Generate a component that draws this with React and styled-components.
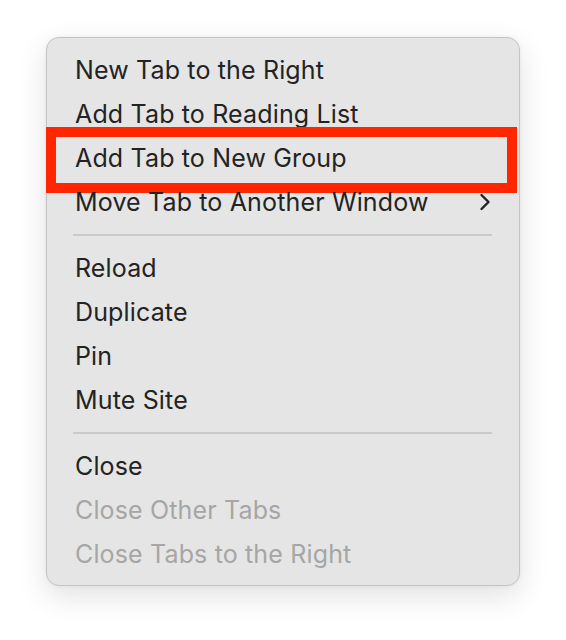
import React from "react";
import styled, { createGlobalStyle } from "styled-components";

const GlobalStyle = createGlobalStyle`
  body {
    margin: 0;
    background: #ffffff;
    font-family: Inter, "Liberation Sans", sans-serif;
  }
`;

const groups = [
  [
    { label: "New Tab to the Right" },
    { label: "Add Tab to Reading List" },
    { label: "Add Tab to New Group", marked: true },
    { label: "Move Tab to Another Window", submenu: true },
  ],
  [{ label: "Reload" }, { label: "Duplicate" }, { label: "Pin" }, { label: "Mute Site" }],
  [
    { label: "Close" },
    { label: "Close Other Tabs", disabled: true },
    { label: "Close Tabs to the Right", disabled: true },
  ],
];

const Page = styled.div`
  padding: 37px 0 0 46px;
  height: 640px;
  box-sizing: border-box;
`;

const Menu = styled.div`
  position: relative;
  width: 474px;
  height: 549px;
  box-sizing: border-box;
  padding: 10px 0 0;
  background: #e5e5e5;
  border: 1px solid #c4c4c4;
  border-radius: 13px;
  box-shadow: 0 10px 30px rgba(0, 0, 0, 0.12), 0 0 4px rgba(0, 0, 0, 0.05);
`;

const Row = styled.div`
  position: relative;
  display: flex;
  align-items: center;
  justify-content: space-between;
  height: 44px;
  padding: 0 28px 0 28px;
  font-size: 25px;
  letter-spacing: 0.15px;
  color: ${(p) => (p.$disabled ? "#a6a6a6" : "#232323")};
`;

const Separator = styled.div`
  height: 22px;
  display: flex;
  align-items: center;
  padding: 0 27px 0 26px;

  &::after {
    content: "";
    flex: 1;
    height: 2px;
    background: #cacaca;
  }
`;

const Marker = styled.div`
  position: absolute;
  left: -1px;
  right: 2px;
  top: -9px;
  bottom: -13px;
  border: 10px solid #ff2600;
  pointer-events: none;
`;

const Chevron = () => (
  <svg width="12" height="18" viewBox="0 0 12 18" fill="none">
    <path d="M2.5 2 L9.5 9 L2.5 16" stroke="#232323" strokeWidth="2.4" strokeLinecap="round" strokeLinejoin="round" />
  </svg>
);

export default function App() {
  return (
    <Page>
      <GlobalStyle />
      <Menu>
        {groups.map((group, gi) => (
          <React.Fragment key={gi}>
            {gi > 0 && <Separator />}
            {group.map((item) => (
              <Row key={item.label} $disabled={item.disabled}>
                <span>{item.label}</span>
                {item.submenu && <Chevron />}
                {item.marked && <Marker />}
              </Row>
            ))}
          </React.Fragment>
        ))}
      </Menu>
    </Page>
  );
}
